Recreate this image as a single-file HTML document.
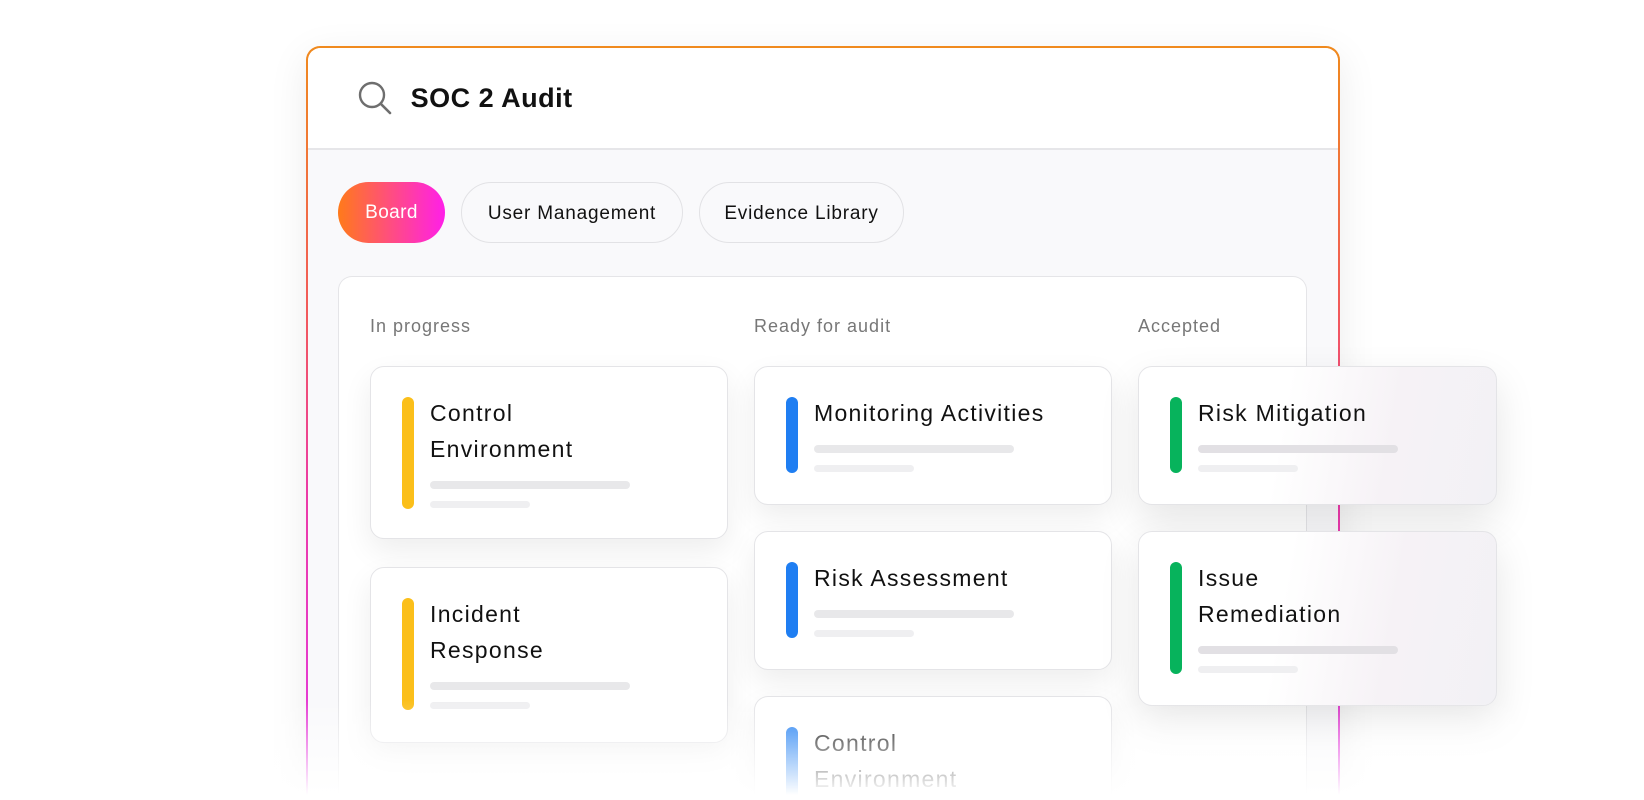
<!DOCTYPE html>
<html><head><meta charset="utf-8"><style>
*{box-sizing:border-box;margin:0;padding:0}
html,body{width:1644px;height:800px;overflow:hidden}
body{background:#fff;position:relative;font-family:"Liberation Sans",Arial,sans-serif;color:#111}
.wrap{position:absolute;left:0;top:0;width:1644px;height:800px;overflow:hidden}
.frame{position:absolute;left:306px;top:46px;width:1034px;height:754px;border-radius:14px 14px 0 0;padding:1.6px 1.6px 0 1.6px;background:linear-gradient(180deg,#f08a1e 0%,#f25a5a 35%,#ec3aa8 60%,#e33ae6 100%);box-shadow:0 10px 40px rgba(0,0,0,.08)}
.inner{width:100%;height:100%;border-radius:12.5px 12.5px 0 0;background:#f9f9fb;overflow:hidden;position:relative}
.hdr{height:102px;background:#fff;border-bottom:2px solid #e6e6e9;position:relative}
.hdr svg{position:absolute;left:50px;top:33px}
.hdr .t{position:absolute;left:103px;top:35px;font-size:27px;font-weight:bold;letter-spacing:.5px}
.tab{position:absolute;height:61px;border-radius:31px;border:1.5px solid #e2e2e5;background:#f9f9fb;font-size:19px;letter-spacing:.8px;line-height:61px;text-align:center;color:#111}
.board{position:absolute;width:969px;height:540px;background:#fff;border:1.5px solid #e5e5e8;border-bottom:none;border-radius:14px 14px 0 0}
.col{position:absolute;font-size:18px;letter-spacing:1px;color:#777}
.card{position:absolute;background:#fff;border:1.5px solid #e4e4e7;border-radius:14px;box-shadow:0 12px 30px rgba(0,0,0,.07)}
.card .bar{position:absolute;left:31px;top:30px;width:12px;border-radius:6px}
.card .tx{position:absolute;left:59px;top:28px;font-size:23px;letter-spacing:1.3px;line-height:36px;color:#111;white-space:nowrap}
.card .s1,.card .s2{position:absolute;left:59px;height:8px;border-radius:4px;background:#e8e8ea}
.card .s1{width:200px}.card .s2{width:100px;height:7px;background:#efeff1}
.g{background:linear-gradient(100deg,#fff 40%,#f6f2f6 70%,#f2f1f5 100%);box-shadow:0 16px 40px rgba(0,0,0,.10)}
.fade{position:absolute;left:0;top:700px;width:1644px;height:100px;background:linear-gradient(180deg,rgba(255,255,255,0),#fff 95%)}
</style></head><body><div class="wrap">
<div class="frame"><div class="inner">
<div class="hdr">
<svg width="34" height="34" viewBox="0 0 34 34"><circle cx="14" cy="14" r="12" fill="none" stroke="#6e6e6e" stroke-width="2.4"/><line x1="23" y1="23" x2="32" y2="32" stroke="#6e6e6e" stroke-width="2.6" stroke-linecap="round"/></svg>
<div class="t">SOC 2 Audit</div>
</div>
</div></div>
<div class="tab" style="left:338px;top:182px;width:107px;border:none;color:#fff;background:linear-gradient(90deg,#ff7a1a,#ff1fe9);letter-spacing:.4px">Board</div>
<div class="tab" style="left:461px;top:182px;width:222px">User Management</div>
<div class="tab" style="left:699px;top:182px;width:205px">Evidence Library</div>
<div class="board" style="left:338px;top:276px"></div>
<div class="col" style="left:370px;top:316px">In progress</div>
<div class="col" style="left:754px;top:316px">Ready for audit</div>
<div class="col" style="left:1138px;top:316px">Accepted</div>

<div class="card" style="left:370px;top:366px;width:358px;height:173px"><div class="bar" style="background:#fbbf1a;height:112px"></div><div class="tx">Control<br>Environment</div><div class="s1" style="top:114px"></div><div class="s2" style="top:134px"></div></div>
<div class="card" style="left:370px;top:567px;width:358px;height:176px"><div class="bar" style="background:#fbbf1a;height:112px"></div><div class="tx">Incident<br>Response</div><div class="s1" style="top:114px"></div><div class="s2" style="top:134px"></div></div>

<div class="card" style="left:754px;top:366px;width:358px;height:139px"><div class="bar" style="background:#1f7ef2;height:76px"></div><div class="tx">Monitoring Activities</div><div class="s1" style="top:78px"></div><div class="s2" style="top:98px"></div></div>
<div class="card" style="left:754px;top:531px;width:358px;height:139px"><div class="bar" style="background:#1f7ef2;height:76px"></div><div class="tx">Risk Assessment</div><div class="s1" style="top:78px"></div><div class="s2" style="top:98px"></div></div>
<div class="card" style="left:754px;top:696px;width:358px;height:104px;border-bottom:none;border-radius:14px 14px 0 0"><div class="bar" style="background:#1f7ef2;height:80px"></div><div class="tx">Control<br>Environment</div></div>

<div class="card g" style="left:1138px;top:366px;width:359px;height:139px"><div class="bar" style="background:#07b35c;height:76px"></div><div class="tx">Risk Mitigation</div><div class="s1" style="top:78px;background:#e2e0e4"></div><div class="s2" style="top:98px"></div></div>
<div class="card g" style="left:1138px;top:531px;width:359px;height:175px"><div class="bar" style="background:#07b35c;height:112px"></div><div class="tx">Issue<br>Remediation</div><div class="s1" style="top:114px;background:#e2e0e4"></div><div class="s2" style="top:134px"></div></div>
<div class="fade"></div>
</div></body></html>
